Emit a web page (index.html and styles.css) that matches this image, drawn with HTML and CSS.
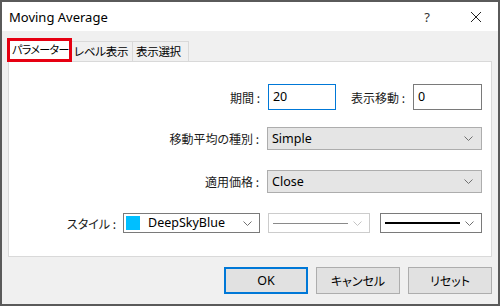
FILE: index.html
```html
<!DOCTYPE html>
<html lang="ja">
<head>
  <meta charset="UTF-8" />
  <title>Moving Average</title>
  <link rel="stylesheet" href="styles.css">
</head>
<body>
  <div class="window">
    <div class="titlebar">
      <span class="title">Moving Average</span>
      <span class="help">?</span>
      <svg class="close" width="12" height="12" viewBox="0 0 12 12"><path d="M1 1 L11 11 M11 1 L1 11" stroke="#222" stroke-width="1"/></svg>
    </div>

    <div class="content">
      <div class="tabs">
        <div class="tab active">パラメーター</div>
        <div class="tab">レベル表示</div>
        <div class="tab">表示選択</div>
      </div>

      <div class="panel">
        <div class="row row1">
          <label>期間 :</label>
          <div class="input focus w68">20</div>
          <label class="gap">表示移動 :</label>
          <div class="input w69">0</div>
        </div>
        <div class="row row2">
          <label>移動平均の種別 :</label>
          <div class="select w215"><span>Simple</span><svg class="chev" width="9" height="5" viewBox="0 0 9 5"><path d="M0.5 0.5 L4.5 4.5 L8.5 0.5" fill="none" stroke="#707070"/></svg></div>
        </div>
        <div class="row row3">
          <label>適用価格 :</label>
          <div class="select w215"><span>Close</span><svg class="chev" width="9" height="5" viewBox="0 0 9 5"><path d="M0.5 0.5 L4.5 4.5 L8.5 0.5" fill="none" stroke="#707070"/></svg></div>
        </div>
        <div class="row row4">
          <label>スタイル :</label>
          <div class="combo color">
            <span class="swatch"></span><span>DeepSkyBlue</span>
            <svg class="chev" width="9" height="5" viewBox="0 0 9 5"><path d="M0.5 0.5 L4.5 4.5 L8.5 0.5" fill="none" stroke="#707070"/></svg>
          </div>
          <div class="combo line disabled">
            <span class="stroke thin"></span>
            <svg class="chev" width="9" height="5" viewBox="0 0 9 5"><path d="M0.5 0.5 L4.5 4.5 L8.5 0.5" fill="none" stroke="#c4c4c4"/></svg>
          </div>
          <div class="combo line">
            <span class="stroke thick"></span>
            <svg class="chev" width="9" height="5" viewBox="0 0 9 5"><path d="M0.5 0.5 L4.5 4.5 L8.5 0.5" fill="none" stroke="#707070"/></svg>
          </div>
        </div>
      </div>

      <div class="buttons">
        <div class="btn default">OK</div>
        <div class="btn">キャンセル</div>
        <div class="btn">リセット</div>
      </div>
    </div>
  </div>
</body>
</html>
```

FILE: styles.css
```css
* {
  box-sizing: border-box;
}

body {
  margin: 0;
  font-family: "Noto Sans", "Noto Sans CJK JP", sans-serif;
  font-size: 12px;
  color: #000;
}

.window {
  width: 500px;
  height: 306px;
  border: 2px solid #5a5a5a;
  background-color: #f0f0f0;
  display: flex;
  flex-direction: column;
}

.titlebar {
  height: 29px;
  background-color: #fff;
  display: flex;
  align-items: center;
  padding-left: 7px;
}

.title {
  font-size: 13px;
  flex: 1;
}

.help {
  font-size: 13px;
  color: #333;
  margin-right: 40px;
}

.close {
  margin-right: 16px;
}

.content {
  padding: 7px 6px 0 6px;
}

.tabs {
  display: flex;
  align-items: flex-end;
  height: 23px;
}

.tab {
  height: 20px;
  line-height: 18px;
  padding: 0 0 0 2px;
  border: 1px solid #d9d9d9;
  border-bottom: none;
  background-color: #f0f0f0;
  font-family: "Noto Sans CJK JP", sans-serif;
  font-feature-settings: "palt";
  font-size: 11.5px;
  letter-spacing: -0.3px;
  white-space: nowrap;
}

.tab.active {
  width: 65px;
  height: 24px;
  margin-left: -1px;
  margin-bottom: -1px;
  background-color: #fff;
  border: 3px solid #e60012;
  line-height: 17px;
  padding: 0 0 0 2px;
  font-size: 11px;
  letter-spacing: -0.6px;
  position: relative;
  z-index: 1;
}

.tab + .tab {
  border-left: none;
}

.tab:nth-child(2) {
  width: 61px;
}

.tab:nth-child(3) {
  width: 56px;
  padding-left: 3px;
}

.panel {
  height: 196px;
  background-color: #fff;
  border: 1px solid #d9d9d9;
  padding: 22px 9px 0 0;
}

.row {
  display: flex;
  justify-content: flex-end;
  align-items: center;
}

.row2 {
  margin-top: 17px;
}

.row3, .row4 {
  margin-top: 20px;
}

.row label {
  margin-right: 8px;
  font-family: "Noto Sans CJK JP", sans-serif;
  font-feature-settings: "palt";
  color: #1a1a1a;
}

.row label.gap {
  margin-left: 15px;
}

.row4 label {
  margin-right: 7px;
}

.input {
  height: 26px;
  border: 1px solid #7a7a7a;
  padding: 3px 0 0 4px;
  font-size: 12.5px;
}

.input.focus {
  border-color: #0078d7;
}

.w68 { width: 68px; }
.w69 { width: 69px; }
.w215 { width: 215px; }

.select {
  height: 23px;
  background-color: #e5e5e5;
  border: 1px solid #adadad;
  display: flex;
  align-items: center;
  justify-content: space-between;
  padding: 0 8px 0 4px;
  font-size: 12.5px;
}

.combo {
  height: 20px;
  width: 102px;
  border: 1px solid #7a7a7a;
  background-color: #fff;
  display: flex;
  align-items: center;
  padding: 0 7px 0 4px;
}

.combo .chev {
  margin-left: auto;
}

.combo.color {
  width: 137px;
  margin-right: 8px;
  padding-left: 2px;
}

.swatch {
  width: 14px;
  height: 14px;
  background-color: #00bfff;
  margin-right: 8px;
}

.combo.color span:nth-child(2) {
  font-size: 12.5px;
  line-height: 18px;
}

.combo.disabled {
  border-color: #cccccc;
  margin-right: 10px;
}

.stroke {
  width: 75px;
  display: block;
}

.stroke.thin {
  height: 1px;
  background-color: #8a8a8a;
}

.stroke.thick {
  height: 2px;
  background-color: #000;
}

.buttons {
  display: flex;
  justify-content: flex-end;
  gap: 8px;
  margin-top: 10px;
}

.btn {
  width: 84px;
  height: 27px;
  border: 1px solid #adadad;
  background-color: #e1e1e1;
  display: flex;
  align-items: center;
  justify-content: center;
  font-family: "Noto Sans CJK JP", sans-serif;
  font-feature-settings: "palt";
}

.btn.default {
  border: 2px solid #0078d7;
  font-family: "Noto Sans", sans-serif;
  font-size: 12.5px;
}
```
